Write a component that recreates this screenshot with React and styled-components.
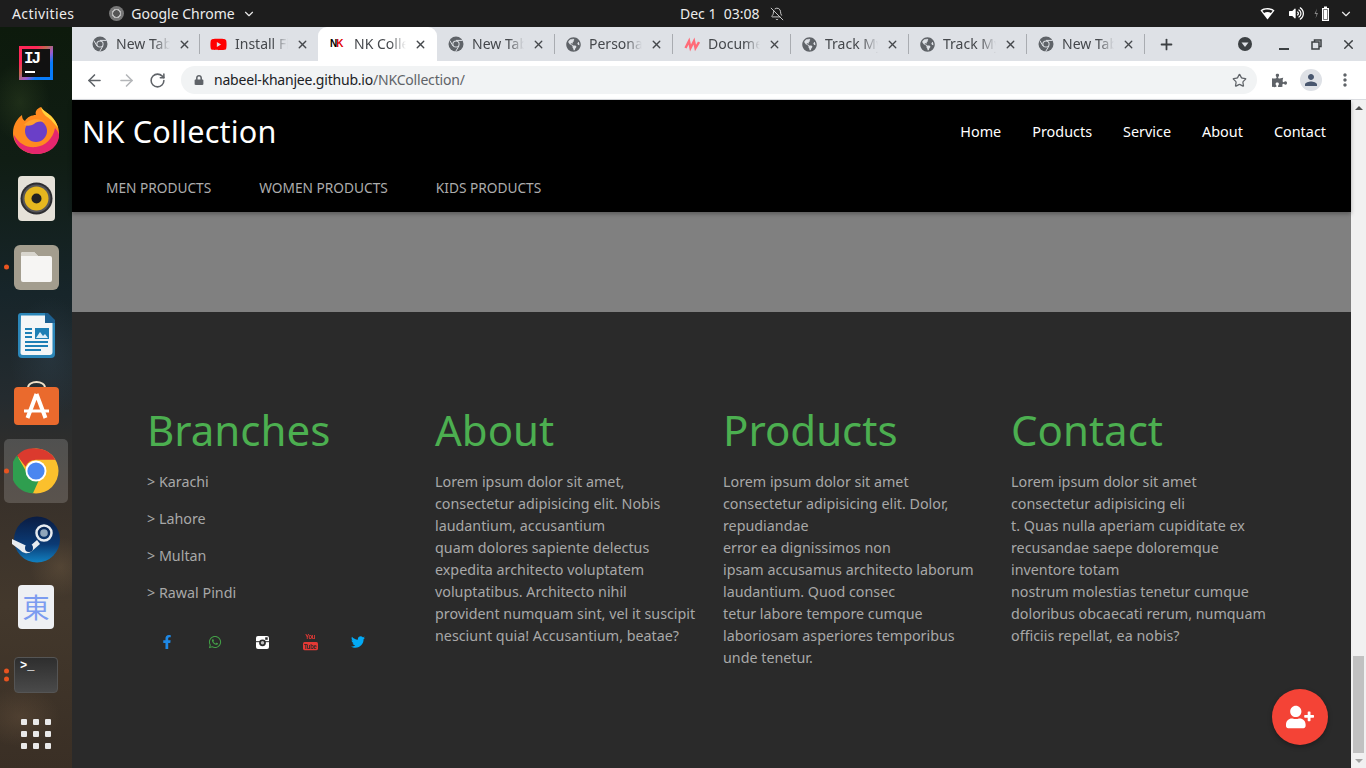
import React from "react";
import styled, { createGlobalStyle } from "styled-components";
import { ArrowLeft, ArrowRight, RotateCw, Star, BellOff, ChevronDown, X, Plus } from "lucide-react";
import { FaFacebookF, FaWhatsapp, FaTwitter, FaUserPlus, FaYoutube, FaLock, FaPuzzlePiece, FaVolumeUp, FaGlobeAmericas } from "react-icons/fa";
import { MdPerson, MdMoreVert } from "react-icons/md";

const GlobalStyle = createGlobalStyle`
  html, body { margin: 0; padding: 0; height: 768px; overflow: hidden; background: #000; }
  * { box-sizing: border-box; }
  body { font-family: "Noto Sans", "Open Sans", sans-serif; }
`;

const tabs = [
  { title: "New Tab", icon: "chrome" },
  { title: "Install Flutter", icon: "youtube" },
  { title: "NK Collection", icon: "nk", active: true },
  { title: "New Tab", icon: "chrome" },
  { title: "Personal", icon: "globe" },
  { title: "Documents", icon: "doc" },
  { title: "Track My", icon: "globe" },
  { title: "Track My", icon: "globe" },
  { title: "New Tab", icon: "chrome" },
];

const footerAbout = [
  "Lorem ipsum dolor sit amet,",
  "consectetur adipisicing elit. Nobis",
  "laudantium, accusantium",
  "quam dolores sapiente delectus",
  "expedita architecto voluptatem",
  "voluptatibus. Architecto nihil",
  "provident numquam sint, vel it suscipit",
  "nesciunt quia! Accusantium, beatae?",
];
const footerProducts = [
  "Lorem ipsum dolor sit amet",
  "consectetur adipisicing elit. Dolor,",
  "repudiandae",
  "error ea dignissimos non",
  "ipsam accusamus architecto laborum",
  "laudantium. Quod consec",
  "tetur labore tempore cumque",
  "laboriosam asperiores temporibus",
  "unde tenetur.",
];
const footerContact = [
  "Lorem ipsum dolor sit amet",
  "consectetur adipisicing eli",
  "t. Quas nulla aperiam cupiditate ex",
  "recusandae saepe doloremque",
  "inventore totam",
  "nostrum molestias tenetur cumque",
  "doloribus obcaecati rerum, numquam",
  "officiis repellat, ea nobis?",
];

function ChromeGrey() {
  return (
    <svg width="16" height="16" viewBox="0 0 16 16">
      <circle cx="8" cy="8" r="7.5" fill="#5f6368" />
      <circle cx="8" cy="8" r="3.6" fill="#dee1e6" />
      <circle cx="8" cy="8" r="2.6" fill="#5f6368" />
      <path d="M8 4.4h6.6M5 10 1.8 4.5M10.9 10l-3.3 5.6" stroke="#dee1e6" strokeWidth="1" />
    </svg>
  );
}

function TabIcon({ type }) {
  if (type === "chrome") return <ChromeGrey />;
  if (type === "youtube") return <FaYoutube size={17} color="#f00" />;
  if (type === "globe") return <FaGlobeAmericas size={15} color="#5f6368" />;
  if (type === "nk") return <NkMark><b>N</b><i>K</i></NkMark>;
  return (
    <svg width="16" height="16" viewBox="0 0 16 16">
      <path d="M1.500 12 5 5 6.500 12 10 5 11.500 12 15 6" fill="none" stroke="#ff6b78" strokeWidth="2.400" />
    </svg>
  );
}

function InstagramIcon() {
  return (
    <svg width="13" height="13" viewBox="0 0 13 13">
      <rect width="13" height="13" rx="2" fill="#fff" />
      <path d="M0 5h13v1.200H0z" fill="#555" />
      <circle cx="6.500" cy="6.800" r="3.400" fill="#2a2a2a" />
      <circle cx="6.500" cy="6.800" r="1.700" fill="#bbb" />
      <rect x="9.200" y="1.300" width="2.500" height="2.500" fill="#2a2a2a" />
    </svg>
  );
}

function ChromeLogo() {
  return (
    <svg width="46" height="46" viewBox="0 0 46 46">
      <circle cx="23" cy="23" r="22.500" fill="#fbc02d" />
      <path d="M23 .5a22.500 22.500 0 0 1 19.500 11.200H23a11.300 11.300 0 0 0-10.400 7L4 7.600A22.500 22.500 0 0 1 23 .5z" fill="#db3a2e" />
      <path d="M4 7.600l9.600 16.600a10 10 0 0 0 12 8.500L20 45.300A22.500 22.500 0 0 1 4 7.600z" fill="#2f9e4f" />
      <circle cx="23" cy="23" r="10.500" fill="#fff" />
      <circle cx="23" cy="23" r="8.600" fill="#4a86f0" />
    </svg>
  );
}

function FirefoxLogo() {
  return (
    <svg width="46" height="48" viewBox="0 0 46 48">
      <path d="M23 47C10 47 0 37 0 26 0 17 5 11 9 8c0 3 1 5 3 6 2-4 7-6 11-6-1-3 0-6 5-8 2 4 6 5 10 9 5 5 8 11 8 17 0 12-10 21-23 21z" fill="#ff8a1f" />
      <path d="M23 47C11 47 1 38 1 28c5 9 13 13 22 12 9-1 17-8 19-19 3 3 4 6 4 7 0 11-10 19-23 19z" fill="#e5266e" />
      <path d="M28 0c2 4 6 5 10 9 4 4 6 8 7 12l-7-8c-3-3-9-5-10-13z" fill="#ffd23c" />
      <circle cx="23" cy="24" r="11" fill="#6a3fc8" />
      <path d="M11 18c4-6 15-8 21-3-6-1-9 0-11 2-3 2-7 2-10 1z" fill="#ff9f2e" />
    </svg>
  );
}

function RhythmboxLogo() {
  return (
    <svg width="37" height="46" viewBox="0 0 37 46">
      <rect width="37" height="45" rx="4" fill="#e5e1d8" />
      <circle cx="18.500" cy="22.500" r="16" fill="#2d2d30" />
      <circle cx="18.500" cy="22.500" r="14" fill="#55555a" />
      <circle cx="18.500" cy="22.500" r="12" fill="#e6b71f" />
      <circle cx="18.500" cy="22.500" r="5" fill="#222" />
    </svg>
  );
}

function FilesLogo() {
  return (
    <svg width="45" height="45" viewBox="0 0 45 45">
      <rect width="45" height="45" rx="6" fill="#a39d8e" />
      <path d="M7 9a2 2 0 0 1 2-2h11l4 4h12a2 2 0 0 1 2 2v22a2 2 0 0 1-2 2H9a2 2 0 0 1-2-2z" fill="#f6f5f3" />
      <path d="M7 9a2 2 0 0 1 2-2h11l4 4H7z" fill="#d8d5cd" />
    </svg>
  );
}

function WriterLogo() {
  return (
    <svg width="37" height="45" viewBox="0 0 37 45">
      <path d="M3 0h26l8 8v33a4 4 0 0 1-4 4H4a4 4 0 0 1-4-4V3a3 3 0 0 1 3-3z" fill="#2b86b8" />
      <path d="M3 2.500h25l6.500 6.500v30a3 3 0 0 1-3 3H5a2.500 2.500 0 0 1-2.500-2.500z" fill="#f4f6f7" />
      <path d="M27 0h3l7 7v3H27z" fill="#1d5f8f" />
      <path d="M7 16h7M7 20h7M7 24h7M7 29h23M7 33h23M7 37h16" stroke="#1e7fb5" strokeWidth="2" />
      <rect x="17" y="15" width="14" height="11" fill="#1e7fb5" />
      <path d="M18 25l4-6 3 4 2-2 3 4z" fill="#dfeef7" />
    </svg>
  );
}

function SoftwareLogo() {
  return (
    <svg width="45" height="44" viewBox="0 0 45 44">
      <path d="M14 7c0-8 17-8 17 0" fill="none" stroke="#efe0c8" strokeWidth="2" />
      <rect y="6" width="45" height="38" rx="4" fill="#ea6a2d" />
      <path d="M22.500 13l-9 24M22.500 13l9 24" stroke="#fff" strokeWidth="4" />
      <path d="M10 30h25" stroke="#fff" strokeWidth="3" />
    </svg>
  );
}

function SteamLogo() {
  return (
    <svg width="48" height="47" viewBox="0 0 48 47">
      <defs>
        <linearGradient id="st" x1="0" y1="0" x2="0" y2="1">
          <stop offset="0" stopColor="#0a1c42" />
          <stop offset="0.6" stopColor="#0b3a74" />
          <stop offset="1" stopColor="#1180c0" />
        </linearGradient>
      </defs>
      <circle cx="25" cy="23.500" r="23" fill="url(#st)" />
      <circle cx="32" cy="17" r="7.500" fill="none" stroke="#e8ecf0" strokeWidth="2.500" />
      <circle cx="32" cy="17" r="3.800" fill="#8fa6bb" />
      <path d="M0 23l17 8 8-7 3 4-8 7a8 8 0 0 1-12-1L0 28z" fill="#e8ecf0" />
      <circle cx="17" cy="32" r="4" fill="#0b3a74" />
    </svg>
  );
}

function TerminalLogo() {
  return (
    <TerminalBox>
      <TerminalPrompt>&gt;_</TerminalPrompt>
    </TerminalBox>
  );
}

function WifiIcon() {
  return (
    <svg width="15" height="13" viewBox="0 0 15 13">
      <path d="M7.500 12.500 0.500 3.500C4 0.300 11 0.300 14.500 3.500z" fill="#fff" />
      <path d="M2.300 3.800C5 2 10 2 12.700 3.800L10.900 6C9 4.800 6 4.800 4.100 6z" fill="#1d1d1d" />
    </svg>
  );
}

function BatteryIcon() {
  return (
    <svg width="17" height="15" viewBox="0 0 17 15">
      <path d="M3 2.500 0.500 8h2l-1 4.500L4 7H2z" fill="#8a8a8a" />
      <path d="M10 .5h3v1.500h2v13H8v-13h2z" fill="#fff" />
      <rect x="9.300" y="3.300" width="4.400" height="10.400" fill="#1d1d1d" />
      <rect x="9.800" y="3.800" width="3.400" height="9.400" fill="#fff" />
    </svg>
  );
}

function TabSearchIcon() {
  return (
    <svg width="16" height="16" viewBox="0 0 16 16">
      <circle cx="8" cy="8" r="7" fill="#3c4043" />
      <path d="M4.500 6.500h7L8 11z" fill="#dee1e6" />
    </svg>
  );
}

function RestoreIcon() {
  return (
    <svg width="11" height="11" viewBox="0 0 11 11">
      <path d="M3.500 3V1h6.500v6.500H8" fill="none" stroke="#3c4043" strokeWidth="1.500" />
      <rect x="1" y="3" width="7" height="7" fill="none" stroke="#3c4043" strokeWidth="1.500" />
    </svg>
  );
}

const dock = [
  { id: "ij" },
  { id: "firefox", node: <FirefoxLogo /> },
  { id: "rhythmbox", node: <RhythmboxLogo /> },
  { id: "files", node: <FilesLogo />, dots: 1 },
  { id: "writer", node: <WriterLogo /> },
  { id: "software", node: <SoftwareLogo /> },
  { id: "chrome", node: <ChromeLogo />, dots: 1, focused: true },
  { id: "steam", node: <SteamLogo /> },
  { id: "mozc" },
  { id: "terminal", node: <TerminalLogo />, dots: 2 },
];

const activeTabIndex = tabs.findIndex((t) => t.active);

export default function App() {
  return (
    <>
      <GlobalStyle />
      <Screen>
        <TopBar>
          <TopLeft>
            <Activities>Activities</Activities>
            <AppMenu>
              <AppMenuIcon />
              <TopText>Google Chrome</TopText>
              <ChevronDown size={14} color="#e8e8e8" />
            </AppMenu>
          </TopLeft>
          <Clock>
            <TopText>Dec 1&nbsp;&nbsp;03:08</TopText>
            <BellOff size={14} color="#dedede" strokeWidth={1.5} />
          </Clock>
          <TopRight>
            <WifiIcon />
            <FaVolumeUp size={15} color="#fff" />
            <BatteryIcon />
            <ChevronDown size={14} color="#e8e8e8" />
          </TopRight>
        </TopBar>
        <Desktop>
          <Dock>
            {dock.map((d) => (
              <DockItem key={d.id} $focused={d.focused}>
                {d.dots > 0 && (
                  <DotGroup>
                    {Array.from({ length: d.dots }).map((_, i) => (
                      <RunDot key={i} />
                    ))}
                  </DotGroup>
                )}
                {d.id === "ij" && (
                  <IjIcon>
                    <IjInner>
                      IJ
                      <IjBar />
                    </IjInner>
                  </IjIcon>
                )}
                {d.id === "mozc" && <MozcIcon>東</MozcIcon>}
                {d.node}
              </DockItem>
            ))}
            <AppGrid>
              {Array.from({ length: 9 }).map((_, i) => (
                <GridDot key={i} />
              ))}
            </AppGrid>
          </Dock>
          <Browser>
            <TabStrip>
              {tabs.map((t, i) => (
                <Tab
                  key={i}
                  $active={t.active}
                  $after={i > activeTabIndex}
                  $sep={!t.active && !(tabs[i + 1] && tabs[i + 1].active)}
                >
                  <TabIcon type={t.icon} />
                  <TabTitle>{t.title}</TabTitle>
                  <X size={13} color="#45484c" strokeWidth={2.5} />
                </Tab>
              ))}
              <NewTab>
                <Plus size={17} color="#3c4043" strokeWidth={2.5} />
              </NewTab>
              <WindowControls>
                <TabSearch>
                  <TabSearchIcon />
                </TabSearch>
                <WinButton>
                  <MinimizeBar />
                </WinButton>
                <WinButton>
                  <RestoreIcon />
                </WinButton>
                <WinButton>
                  <X size={15} color="#3c4043" strokeWidth={2.2} />
                </WinButton>
              </WindowControls>
            </TabStrip>
            <Toolbar>
              <ArrowLeft size={19} color="#5f6368" strokeWidth={2} />
              <ArrowRight size={19} color="#b4b6b9" strokeWidth={2} />
              <RotateCw size={17} color="#5f6368" strokeWidth={2.2} />
              <UrlBar>
                <FaLock size={10} color="#5f6368" />
                <UrlText>
                  nabeel-khanjee.github.io<UrlPath>/NKCollection/</UrlPath>
                </UrlText>
                <UrlStar>
                  <Star size={15} color="#5f6368" strokeWidth={2} />
                </UrlStar>
              </UrlBar>
              <ToolIcons>
                <FaPuzzlePiece size={15} color="#5f6368" />
                <Avatar>
                  <MdPerson size={18} color="#48566e" />
                </Avatar>
                <MdMoreVert size={20} color="#5f6368" />
              </ToolIcons>
            </Toolbar>
            <Viewport>
              <Page>
                <Header>
                  <NavRow>
                    <Brand>NK Collection</Brand>
                    <NavLinks>
                      {["Home", "Products", "Service", "About", "Contact"].map((n) => (
                        <NavLink key={n}>{n}</NavLink>
                      ))}
                    </NavLinks>
                  </NavRow>
                  <SubNav>
                    {["MEN PRODUCTS", "WOMEN PRODUCTS", "KIDS PRODUCTS"].map((n) => (
                      <SubLink key={n}>{n}</SubLink>
                    ))}
                  </SubNav>
                </Header>
                <GreyBand />
                <Footer>
                  <FooterCol>
                    <FooterTitle>Branches</FooterTitle>
                    <BranchList>
                      {["Karachi", "Lahore", "Multan", "Rawal Pindi"].map((b) => (
                        <FooterLine key={b}>&gt; {b}</FooterLine>
                      ))}
                    </BranchList>
                    <Socials>
                      <SocialSlot><FaFacebookF size={14} color="#1e88e5" /></SocialSlot>
                      <SocialSlot><FaWhatsapp size={14} color="#43a047" /></SocialSlot>
                      <SocialSlot><InstagramIcon /></SocialSlot>
                      <SocialSlot>
                        <YoutubeStack>
                          <YouWord>You</YouWord>
                          <TubeWord>Tube</TubeWord>
                        </YoutubeStack>
                      </SocialSlot>
                      <SocialSlot><FaTwitter size={14} color="#03a9f4" /></SocialSlot>
                    </Socials>
                  </FooterCol>
                  <FooterCol>
                    <FooterTitle>About</FooterTitle>
                    {footerAbout.map((l) => <FooterLine key={l}>{l}</FooterLine>)}
                  </FooterCol>
                  <FooterCol>
                    <FooterTitle>Products</FooterTitle>
                    {footerProducts.map((l) => <FooterLine key={l}>{l}</FooterLine>)}
                  </FooterCol>
                  <FooterCol>
                    <FooterTitle>Contact</FooterTitle>
                    {footerContact.map((l) => <FooterLine key={l}>{l}</FooterLine>)}
                  </FooterCol>
                </Footer>
                <Fab>
                  <FaUserPlus size={28} color="#fff" />
                </Fab>
              </Page>
              <Scrollbar>
                <ScrollArrow $up />
                <ScrollTrack>
                  <ScrollThumb />
                </ScrollTrack>
                <ScrollArrow />
              </Scrollbar>
            </Viewport>
          </Browser>
        </Desktop>
      </Screen>
    </>
  );
}

const Screen = styled.div`
  width: 1366px;
  height: 768px;
  display: flex;
  flex-direction: column;
  overflow: hidden;
`;

const TopBar = styled.div`
  height: 27px;
  background: #1d1d1d;
  display: grid;
  grid-template-columns: 668px auto 1fr;
  align-items: center;
  padding: 0 8px 0 12px;
  color: #ececec;
`;

const TopLeft = styled.div`
  display: flex;
  align-items: center;
  gap: 35px;
`;

const TopText = styled.span`
  font-size: 14px;
  white-space: nowrap;
`;

const Activities = styled(TopText)`
  letter-spacing: 0.4px;
`;

const AppMenu = styled.div`
  display: flex;
  align-items: center;
  gap: 7px;
`;

const AppMenuIcon = styled.div`
  width: 15px;
  height: 15px;
  border-radius: 50%;
  background: radial-gradient(circle, #555 0 3px, #bbb 3.5px 4.5px, #777 5px);
`;

const Clock = styled.div`
  display: flex;
  align-items: center;
  gap: 10px;
`;

const TopRight = styled.div`
  display: grid;
  grid-template-columns: 30px 28px 24px 24px;
  justify-content: end;
  justify-items: center;
  align-items: center;
`;

const Desktop = styled.div`
  flex: 1;
  min-height: 0;
  display: flex;
`;

const Dock = styled.div`
  width: 72px;
  flex: none;
  padding-top: 2px;
  display: flex;
  flex-direction: column;
  background:
    radial-gradient(ellipse 30px 40px at 20px 75px, rgba(60, 80, 40, 0.35), transparent),
    radial-gradient(ellipse 40px 60px at 50px 330px, rgba(60, 85, 105, 0.25), transparent),
    radial-gradient(ellipse 30px 30px at 60px 540px, rgba(130, 105, 75, 0.3), transparent),
    radial-gradient(ellipse 40px 30px at 20px 690px, rgba(120, 95, 70, 0.3), transparent),
    linear-gradient(180deg, #0d1a0c 0%, #101d14 18%, #17252a 36%, #242b2f 50%, #37302a 62%, #43382c 78%, #3a2f25 100%);
`;

const DockItem = styled.div`
  position: relative;
  margin: ${(p) => (p.$focused ? "2px 4px" : "0 4px")};
  height: ${(p) => (p.$focused ? "64px" : "68px")};
  flex: none;
  display: flex;
  align-items: center;
  justify-content: center;
  border-radius: 5px;
  background: ${(p) => (p.$focused ? "rgba(255,255,255,0.17)" : "transparent")};
`;

const DotGroup = styled.div`
  position: absolute;
  left: 0;
  top: 50%;
  transform: translateY(-50%);
  display: flex;
  flex-direction: column;
  gap: 3px;
`;

const RunDot = styled.span`
  display: block;
  width: 5px;
  height: 5px;
  border-radius: 50%;
  background: #e95420;
`;

const IjIcon = styled.div`
  width: 34px;
  height: 34px;
  padding: 3px;
  background: linear-gradient(135deg, #fe2857 0%, #fe2857 28%, #c06a50 42%, #9a5bd0 58%, #087cfa 72%, #087cfa 100%);
`;

const IjInner = styled.div`
  position: relative;
  width: 100%;
  height: 100%;
  background: #111;
  color: #fff;
  font: bold 16px/16px "Liberation Mono", monospace;
  letter-spacing: -2px;
  padding: 2px 0 0 2px;
`;

const IjBar = styled.span`
  position: absolute;
  left: 3px;
  bottom: 4px;
  width: 10px;
  height: 2px;
  background: #fff;
`;

const MozcIcon = styled.div`
  width: 36px;
  height: 44px;
  border-radius: 4px;
  background: #eef0f3;
  color: #7c9cf0;
  font: 27px/44px "Noto Sans CJK JP", sans-serif;
  text-align: center;
`;

const TerminalBox = styled.div`
  width: 44px;
  height: 36px;
  border-radius: 4px;
  background: linear-gradient(180deg, #2e2e2e, #4a4a4a);
  border: 1px solid #555;
`;

const TerminalPrompt = styled.div`
  font: bold 12px/14px "Liberation Mono", monospace;
  color: #fff;
  padding: 1px 0 0 5px;
`;

const AppGrid = styled.div`
  margin: 10px auto 0;
  width: 30px;
  display: grid;
  grid-template-columns: repeat(3, 6px);
  justify-content: space-between;
  row-gap: 6px;
`;

const GridDot = styled.span`
  width: 6px;
  height: 6px;
  border-radius: 1px;
  background: #e9e9e9;
`;

const Browser = styled.div`
  flex: 1;
  min-width: 0;
  display: flex;
  flex-direction: column;
`;

const TabStrip = styled.div`
  height: 34px;
  background: #dee1e6;
  display: flex;
  align-items: center;
  padding-left: 10px;
`;

const Tab = styled.div`
  position: relative;
  width: ${(p) => (p.$active ? "119px" : "118px")};
  height: 34px;
  flex: none;
  padding: 0 ${(p) => (p.$active || p.$after ? "10px" : "9px")} 0 ${(p) => (p.$active ? "12px" : p.$after ? "11px" : "10px")};
  display: flex;
  align-items: center;
  gap: 8px;
  border-radius: 9px 9px 0 0;
  background: ${(p) => (p.$active ? "#fff" : "transparent")};
  &::after {
    content: "";
    display: ${(p) => (p.$sep ? "block" : "none")};
    position: absolute;
    right: 0;
    top: 7px;
    width: 1px;
    height: 20px;
    background: #a9acb1;
  }
`;

const NkMark = styled.span`
  width: 16px;
  flex: none;
  font: bold 10px/16px "Liberation Sans", sans-serif;
  letter-spacing: -1px;
  b { color: #000; }
  i { color: #e00000; font-style: normal; }
`;

const TabTitle = styled.span`
  flex: 1;
  min-width: 0;
  overflow: hidden;
  white-space: nowrap;
  font-size: 14px;
  color: #45484c;
  margin-top: -2px;
  -webkit-mask-image: linear-gradient(90deg, #000 70%, transparent 100%);
  mask-image: linear-gradient(90deg, #000 70%, transparent 100%);
`;

const NewTab = styled.div`
  display: flex;
  margin-left: 13px;
`;

const WindowControls = styled.div`
  margin-left: auto;
  padding-right: 2px;
  display: flex;
  align-items: center;
`;

const WinButton = styled.div`
  width: 32px;
  height: 20px;
  display: flex;
  align-items: center;
  justify-content: center;
`;

const TabSearch = styled(WinButton)`
  margin-right: 7px;
`;

const MinimizeBar = styled.span`
  width: 10px;
  height: 2px;
  background: #3c4043;
  margin-top: 9px;
`;

const Toolbar = styled.div`
  height: 39px;
  background: #fff;
  border-bottom: 1px solid #dadce0;
  display: flex;
  align-items: center;
  padding: 0 11px 0 13px;
  gap: 13px;
`;

const UrlBar = styled.div`
  flex: 1;
  height: 28px;
  margin-left: 2px;
  border-radius: 14px;
  background: #f1f3f4;
  display: flex;
  align-items: center;
  padding: 0 10px 0 13px;
`;

const UrlText = styled.span`
  margin-left: 10px;
  margin-top: -2px;
  font-size: 14px;
  letter-spacing: -0.2px;
  color: #202124;
`;

const UrlPath = styled.span`
  color: #5f6368;
`;

const UrlStar = styled.span`
  margin-left: auto;
  display: flex;
`;

const ToolIcons = styled.div`
  display: flex;
  align-items: center;
  gap: 13px;
  margin-left: 2px;
`;

const Avatar = styled.div`
  width: 22px;
  height: 22px;
  border-radius: 50%;
  background: #dee1e6;
  display: flex;
  align-items: center;
  justify-content: center;
`;

const Viewport = styled.div`
  flex: 1;
  min-height: 0;
  display: flex;
`;

const Page = styled.div`
  flex: 1;
  min-width: 0;
  position: relative;
  display: flex;
  flex-direction: column;
  background: #2a2a2a;
`;

const Header = styled.div`
  background: #000;
  color: #fff;
  box-shadow: 0 2px 4px rgba(0, 0, 0, 0.3);
  position: relative;
`;

const NavRow = styled.div`
  height: 64px;
  display: flex;
  align-items: center;
  justify-content: space-between;
  padding: 0 25px 2px 10px;
`;

const Brand = styled.span`
  font-size: 30.600px;
  line-height: 60px;
  letter-spacing: 0.2px;
`;

const NavLinks = styled.div`
  display: flex;
  gap: 31px;
`;

const NavLink = styled.span`
  font-size: 14.400px;
  color: #fff;
`;

const SubNav = styled.div`
  height: 48px;
  display: flex;
  align-items: center;
  padding: 0 0 2px 34px;
  gap: 48px;
`;

const SubLink = styled.span`
  font-size: 13.700px;
  color: #adadad;
`;

const GreyBand = styled.div`
  height: 100px;
  background: #808080;
`;

const Footer = styled.div`
  flex: 1;
  padding: 91px 0 0 75px;
  display: grid;
  grid-template-columns: repeat(4, 288px);
  align-content: start;
`;

const FooterCol = styled.div`
  display: flex;
  flex-direction: column;
`;

const FooterTitle = styled.h3`
  margin: 0 0 14px;
  font-size: 42px;
  line-height: 54px;
  font-weight: 400;
  color: #4caf50;
`;

const FooterLine = styled.span`
  font-size: 14.300px;
  line-height: 22px;
  color: #a8a8a8;
  white-space: nowrap;
`;

const BranchList = styled.div`
  display: flex;
  flex-direction: column;
  gap: 15px;
`;

const Socials = styled.div`
  margin-top: 30px;
  padding-left: 12px;
  width: 219px;
  display: flex;
  align-items: center;
  justify-content: space-between;
`;

const SocialSlot = styled.div`
  width: 16px;
  height: 16px;
  display: flex;
  align-items: center;
  justify-content: center;
`;

const YoutubeStack = styled.div`
  display: flex;
  flex-direction: column;
  align-items: center;
  color: #e53935;
  font-family: "Liberation Sans", sans-serif;
  font-weight: bold;
  transform: scaleY(1.35);
`;

const YouWord = styled.span`
  font-size: 6px;
  line-height: 5.500px;
  letter-spacing: -0.3px;
`;

const TubeWord = styled.span`
  font-size: 6px;
  line-height: 6px;
  padding: 0 1px;
  border-radius: 1.500px;
  letter-spacing: -0.3px;
  background: #e53935;
  color: #2a2a2a;
`;

const Fab = styled.div`
  position: absolute;
  right: 23px;
  bottom: 23px;
  width: 56px;
  height: 56px;
  border-radius: 50%;
  background: #f44336;
  box-shadow: 0 2px 5px rgba(0, 0, 0, 0.3);
  display: flex;
  align-items: center;
  justify-content: center;
`;

const Scrollbar = styled.div`
  width: 15px;
  flex: none;
  background: #f1f1f1;
  display: flex;
  flex-direction: column;
`;

const ScrollArrow = styled.div`
  height: 15px;
  flex: none;
  display: flex;
  align-items: center;
  justify-content: center;
  &::before {
    content: "";
    border-left: 4px solid transparent;
    border-right: 4px solid transparent;
    ${(p) => (p.$up ? "border-bottom: 4px solid #505050;" : "border-top: 4px solid #a3a3a3;")}
  }
`;

const ScrollTrack = styled.div`
  flex: 1;
  display: flex;
  flex-direction: column;
  justify-content: flex-end;
`;

const ScrollThumb = styled.div`
  height: 97px;
  margin: 0 2px;
  background: #c1c1c1;
`;
